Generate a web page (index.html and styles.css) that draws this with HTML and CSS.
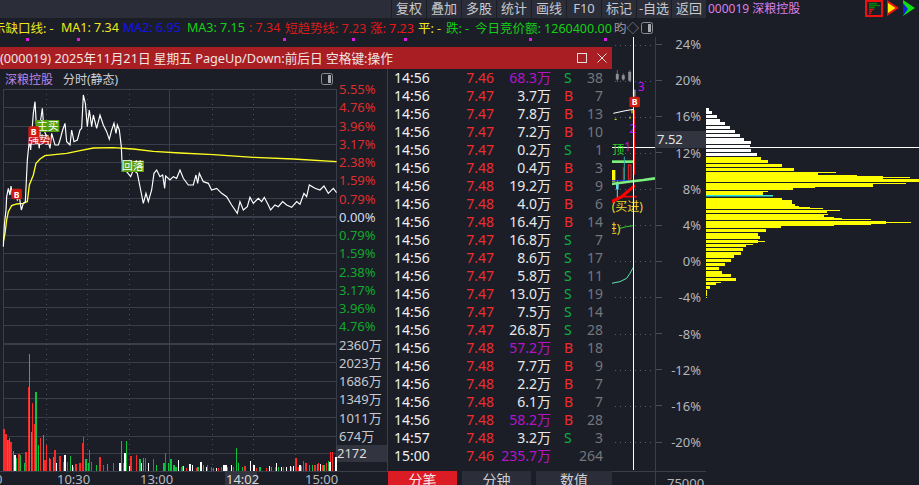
FILE: index.html
```html
<!DOCTYPE html>
<html lang="zh-CN">
<head>
<meta charset="utf-8">
<title>深粮控股 分时</title>
<link rel="stylesheet" href="styles.css">
</head>
<body>
<div class="app">
  <main class="main">
    <nav class="toolbar">
      <span class="tool">复权</span><span class="tool">叠加</span><span class="tool">多股</span><span class="tool">统计</span><span class="tool">画线</span><span class="tool">F10</span><span class="tool">标记</span><span class="tool">-自选</span><span class="tool">返回</span>
    </nav>
    <div class="info">
      <span class="c-y i0">示缺口线: -</span>
      <span class="c-y i1">MA1: 7.34</span>
      <span class="c-b i2">MA2: 6.95</span>
      <span class="c-g i3">MA3: 7.15</span>
      <span class="c-r i4">: 7.34</span>
      <span class="c-r i5">短趋势线: 7.23</span>
      <span class="c-r2 i6">涨: 7.23</span>
      <span class="c-y i7">平: -</span>
      <span class="c-g i8">跌: -</span>
      <span class="c-g i9">今日竞价额: 1260400.00</span>
      <span class="c-grey i10">昀◇</span>
      <svg class="panel-icon i11" viewBox="0 0 12 12"><rect x=".5" y=".5" width="11" height="11" rx="2" fill="none" stroke="#8a8d94"/><rect x="7" y="2" width="3" height="8" fill="#a8abb2"/></svg>
    </div>
    <div class="stage">
      <svg class="canvas" viewBox="0 37 655 448" width="655" height="448">
        <g fill="#e018e8"><rect x="26" y="38" width="3" height="3"/><rect x="77" y="38" width="3" height="3"/><rect x="283" y="38" width="3" height="3"/><rect x="352" y="38" width="3" height="3"/><rect x="404" y="38" width="3" height="3"/><rect x="529" y="38" width="3" height="3"/><rect x="604" y="38" width="3" height="3"/></g>
        <g stroke="#5a5e68" stroke-dasharray="1 4"><path d="M615 45.5H655M615 81.5H655M615 117.5H655M615 153.5H655M615 189.5H655M615 225.5H655M615 261.5H655M615 297.5H655M615 334.5H655M615 370.5H655M615 406.5H655M615 442.5H655"/></g>
        <path d="M612 471.5H655" stroke="#3a3e4a"/>
        <path d="M612 147.5H655" stroke="#fff"/>
        <g transform="translate(600 60) scale(.3333)">
          <g fill="#8d8f94" stroke="#8d8f94"><path d="M52 30V66M70 40V62M90 30V66M104 88V110" stroke-width="2" fill="none"/><rect x="48" y="42" width="8" height="16"/><rect x="66" y="46" width="8" height="12"/><rect x="85" y="36" width="8" height="26"/><rect x="99" y="90" width="7" height="20"/></g>
          <path d="M40 160L72 153 100 148" stroke="#fff" stroke-width="3" fill="none"/>
          <path d="M44 178H50M90 176V170M96 150V160" stroke="#ff0" stroke-width="3"/>
          <path d="M103 150V345" stroke="#f22" stroke-width="4"/>
          <path d="M35 305H100" stroke="#7cf07c" stroke-width="8"/>
          <path d="M73 290V360" stroke="#3aa" stroke-width="3"/>
          <rect x="36" y="330" width="10" height="35" fill="#ff0"/>
          <path d="M70 322V370" stroke="#f22" stroke-width="3"/>
          <rect x="85" y="315" width="8" height="42" fill="none" stroke="#f22" stroke-width="3"/>
          <rect x="48" y="366" width="8" height="22" fill="#5fdce8"/><path d="M52 360V416" stroke="#5fdce8" stroke-width="3"/>
          <path d="M35 362H100" stroke="#1a3cf0" stroke-width="3"/>
          <path d="M35 372L80 366 130 360 165 355" stroke="#7cf07c" stroke-width="8" fill="none"/>
          <path d="M35 425L65 410 105 376" stroke="#f00" stroke-width="9" fill="none"/>
          <path d="M70 410H110" stroke="#f00" stroke-width="5"/>
          <path d="M60 505L80 500 100 497" stroke="#2fd02f" stroke-width="3" fill="none"/>
          <path d="M35 670L60 665 80 655 90 640 100 622" stroke="#5fe8b0" stroke-width="3" fill="none"/>
          <text x="113" y="92" class="sv-n" fill="#c010f0">3</text>
          <text x="88" y="220" class="sv-n" fill="#c010f0">2</text>
          <text x="72" y="272" class="sv-n" fill="#c010f0">1</text>
          <text x="37" y="281" class="sv-t" fill="#25d025">顶</text>
          <text x="35" y="452" class="sv-t" fill="#e8d828">(买进)</text>
          <text x="14" y="520" class="sv-t" fill="#e8d828">进)</text>
        </g>
        <path d="M633.5 37V470" stroke="#fff"/>
        <g transform="translate(600 60) scale(.3333)">
          <rect x="88" y="110" width="32" height="32" rx="5" fill="#d01c10"/>
          <text x="104" y="136" class="sv-b">B</text>
        </g>
        <path d="M611.5 69V485" stroke="#8a8c90"/>
      </svg>
      <aside class="scale">
        <div class="scale-list">
          <div class="tick-row"><i class="tick"></i><span>24%</span></div>
          <div class="tick-row"><i class="tick"></i><span>20%</span></div>
          <div class="tick-row"><i class="tick"></i><span>16%</span></div>
          <div class="tick-row"><i class="tick"></i><span>12%</span></div>
          <div class="tick-row"><i class="tick"></i><span>8%</span></div>
          <div class="tick-row"><i class="tick"></i><span>4%</span></div>
          <div class="tick-row"><i class="tick"></i><span>0%</span></div>
          <div class="tick-row"><i class="tick"></i><span>-4%</span></div>
          <div class="tick-row"><i class="tick"></i><span>-8%</span></div>
          <div class="tick-row"><i class="tick"></i><span>-12%</span></div>
          <div class="tick-row"><i class="tick"></i><span>-16%</span></div>
          <div class="tick-row"><i class="tick"></i><span>-20%</span></div>
        </div>
        <div class="scale-foot">75000</div>
        <div class="price-tag">7.52</div>
      </aside>
    </div>
  </main>

  <aside class="side">
    <header class="side-head">
      <span class="side-title">000019 深粮控股</span>
      <div class="side-icons">
        <svg width="18" height="17" viewBox="0 0 18 17"><rect x="1" y="1" width="16" height="15" fill="none" stroke="#f01010" stroke-width="2"/><path d="M4 3.500H12M4 5.500H15M4 7.500H10" stroke="#0b7d0b" stroke-width="1.400"/><path d="M4 9.500H9M4 11.500H7M4 13.500H6" stroke="#e01010" stroke-width="1.400"/></svg>
        <svg width="12" height="16" viewBox="0 0 12 16"><path d="M0 0L12 8 0 16Z" fill="#f01010"/><path d="M1 3L8.500 8 1 13Z" fill="#ffee00"/></svg>
        <svg width="12" height="16" viewBox="0 0 12 16"><path d="M0 0L12 8 0 16Z" fill="#10e010"/><path d="M0 3L5 9 0 16Z" fill="#1020e0"/></svg>
      </div>
    </header>
    <svg class="profile" viewBox="0 18 213 467" width="213" height="467">
      <g fill="#fff">
        <rect y="108" width="3" height="3"/><rect y="111" width="6" height="3"/><rect y="115" width="11" height="3"/><rect y="119" width="14" height="3"/><rect y="122" width="19" height="3"/><rect y="126" width="24" height="3"/><rect y="130" width="29" height="3"/><rect y="134" width="34" height="3"/><rect y="138" width="38" height="3"/><rect y="141" width="45" height="3"/><rect y="145" width="44" height="2"/><rect y="149" width="45" height="3"/><rect y="153" width="51" height="3"/>
      </g>
      <g fill="#ffff00">
        <rect y="157" width="55" height="3"/><rect y="160" width="62" height="3"/><rect y="164" width="76" height="3"/><rect y="168" width="88" height="3"/><rect y="172" width="112" height="3"/><rect y="172" width="130" height="1"/><rect y="175" width="151" height="1"/>
        <rect y="176" width="177" height="3"/><rect y="177" width="204" height="1"/><rect y="179" width="213" height="3"/><rect y="183" width="200" height="1"/><rect y="184" width="167" height="3"/><rect y="187" width="87" height="3"/><rect y="187" width="109" height="1"/>
        <rect y="191" width="62" height="1"/><rect y="192" width="57" height="3"/><rect y="198" width="76" height="3"/><rect y="200" width="86" height="4"/><rect y="204" width="89" height="2"/><rect y="206" width="93" height="3"/><rect y="207" width="104" height="2"/><rect y="208" width="117" height="1"/>
        <rect y="210" width="134" height="1"/><rect y="211" width="121" height="2"/><rect y="214" width="118" height="3"/><rect y="214" width="122" height="1"/><rect y="217" width="128" height="1"/><rect y="218" width="136" height="2"/><rect y="219" width="165" height="1"/>
        <rect y="221" width="180" height="3"/><rect y="222" width="205" height="1"/><rect y="224" width="165" height="1"/><rect y="225" width="128" height="1"/><rect y="226" width="75" height="2"/>
        <rect y="229" width="60" height="3"/><rect y="233" width="52" height="3"/><rect y="236" width="54" height="3"/><rect y="240" width="52" height="3"/><rect y="241" width="59" height="1"/><rect y="244" width="40" height="3"/><rect y="244" width="47" height="1"/><rect y="248" width="37" height="3"/><rect y="252" width="35" height="3"/><rect y="255" width="28" height="3"/><rect y="259" width="25" height="3"/><rect y="263" width="19" height="3"/><rect y="267" width="13" height="3"/><rect y="271" width="16" height="3"/><rect y="274" width="25" height="3"/><rect y="278" width="30" height="3"/><rect y="282" width="10" height="3"/><rect y="282" width="15" height="1"/><rect y="286" width="4" height="3"/><rect y="290" width="1" height="3"/><rect y="293" width="1" height="3"/><rect y="297" width="1" height="1"/>
      </g>
      <rect y="195" width="67" height="1.500" fill="#30e8d8"/>
      <path d="M0 147.500H213" stroke="#fff"/>
    </svg>
  </aside>

  <section class="window">
    <header class="win-title">
      <span>(000019) 2025年11月21日 星期五 PageUp/Down:前后日 空格键:操作</span>
      <div class="win-ctrl">
        <svg width="10" height="10" viewBox="0 0 10 10"><rect x=".5" y=".5" width="9" height="9" fill="none" stroke="#e8dcdc"/></svg>
        <svg width="10" height="10" viewBox="0 0 10 10"><path d="M.5 .5L9.500 9.500M9.500 .5L.5 9.500" stroke="#e8dcdc"/></svg>
      </div>
    </header>
    <div class="win-body">
      <div class="tick-panel">
        <div class="tick-grid">
          <div class="tick-chart">
            <div class="tick-head">
              <span class="stock">深粮控股</span><span class="mode">分时(静态)</span>
              <svg class="panel-icon push" viewBox="0 0 12 12"><rect x=".5" y=".5" width="11" height="11" rx="2" fill="none" stroke="#8a8d94"/><rect x="7" y="2" width="3" height="8" fill="#a8abb2"/></svg>
            </div>
            <svg class="tick-svg" viewBox="0 89 337 382" width="337" height="382">
              <g stroke="#3a3e4a"><path d="M3.500 89V471M169.500 89V471M336.500 89V471M3 89.500H336M3 107.500H336M3 126.500H336M3 144.500H336M3 162.500H336M3 180.500H336M3 198.500H336M3 235.500H336M3 253.500H336M3 271.500H336M3 289.500H336M3 307.500H336M3 325.500H336M3 362.500H336M3 381.500H336M3 398.500H336M3 417.500H336M3 436.500H336M3 453.500H336"/></g>
              <path d="M3 217H336M3 344H336" stroke="#3a3e4a" stroke-width="2"/>
              <path d="M46.500 89V471M87.500 89V471M129.500 89V471M212.500 89V471M253.500 89V471M295.500 89V471" stroke="#4a4e5a" stroke-dasharray="1 4"/>
              <g transform="translate(0 90) scale(.3333)" fill="none">
                <polyline stroke="#ffff20" stroke-width="4" points="10,455 15,430 20,390 25,365 35,347 50,342 70,340 82,335 88,285 100,255 108,220 120,207 135,197 170,193 200,190 240,182 280,174 340,173 400,177 460,184 540,189 640,194 760,202 880,207 1010,215"/>
                <polyline stroke="#fff" stroke-width="3.500" points="10,470 13,405 18,360 20,320 25,295 30,315 33,288 38,320 45,305 52,330 58,320 64,360 70,340 76,335 82,210 88,150 92,180 97,110 100,70 105,35 110,120 118,175 122,90 127,55 132,120 140,140 150,175 155,130 165,165 175,165 180,150 188,120 195,100 200,155 210,165 215,120 222,155 232,150 240,120 245,115 250,15 256,40 262,110 268,60 275,110 280,75 290,115 300,75 310,105 320,125 328,148 335,120 342,100 348,130 352,105 358,120 364,170 366,215 380,245 392,260 400,240 412,250 422,300 430,340 438,310 445,335 455,300 462,250 470,240 480,260 488,255 494,295 497,258 510,270 520,260 530,265 540,240 550,265 565,285 580,285 588,255 593,280 598,250 610,275 625,280 635,300 650,295 665,310 680,320 695,345 712,370 720,335 730,360 742,350 750,322 760,340 775,325 785,335 793,322 805,345 812,360 825,345 835,350 848,335 860,345 875,352 890,335 900,343 912,310 920,320 928,285 945,295 960,300 972,288 985,310 1000,295 1010,308"/>
              </g>
              <g transform="translate(0 90) scale(.3333)">
                <rect x="85" y="140" width="67" height="21" fill="#c8202a"/>
                <text x="85" y="161" class="sv-tag" fill="#ffe8e8">强势</text>
                <rect x="108" y="90" width="70" height="36" fill="#56a010"/>
                <text x="110" y="120" class="sv-tag" fill="#fff">主买</text>
                <rect x="364" y="212" width="68" height="34" fill="#56a010"/>
                <text x="365" y="241" class="sv-tag" fill="#fff">回落</text>
                <rect x="85" y="109" width="33" height="33" rx="6" fill="#d01c10"/>
                <text x="101" y="136" class="sv-b">B</text>
                <rect x="34" y="296" width="32" height="32" rx="6" fill="#d01c10"/>
                <text x="50" y="323" class="sv-b">B</text>
              </g>
              <g transform="translate(0 330) scale(.3333)" stroke-width="4" shape-rendering="crispEdges" fill="none">
                <path stroke="#fa2a2a" d="M12 423V297M18 423V312M27 423V330M33 423V335M45 423V378M57 423V372M78 423V365M85 423V170M97 423V220M103 423V282M122 423V325M135 423V390M140 423V345M150 423V388M165 423V360M180 423V378M190 423V395M203 423V395M220 423V410M228 423V402M240 423V400M247 423V340M250 423V322M268 423V360M275 423V395M300 423V380M310 423V405M340 423V400M358 423V398M372 423V400M393 423V378M410 423V376M436 423V385M460 423V388M496 423V368M520 423V410M545 423V412M560 423V414M590 423V414M622 423V405M635 423V412M655 423V415M665 423V412M700 423V412M735 423V407M770 423V415M800 423V414M826 423V410M850 423V412M888 423V385M895 423V410M910 423V393M918 423V400M945 423V405M955 423V400M968 423V405M980 423V400M992 423V366M998 423V366"/>
                <path stroke="#10c040" d="M22 423V330M28 423V323M40 423V363M50 423V385M62 423V375M73 423V400M88 423V72M94 423V305M108 423V186M115 423V345M130 423V315M148 423V385M160 423V380M211 423V378M258 423V387M265 423V400M290 423V405M322 423V402M364 423V333M380 423V333M420 423V388M430 423V385M470 423V405M492 423V400M505 423V398M513 423V386M522 423V405M528 423V412M548 423V408M594 423V412M610 423V405M640 423V413M682 423V412M709 423V354M715 423V400M728 423V410M780 423V412M815 423V410M835 423V412M875 423V412M905 423V408M928 423V405M938 423V404M952 423V402M972 423V405M986 423V393"/>
                <path stroke="#fff" d="M45 423V375M170 423V400M195 423V375M218 423V405M360 423V400M375 423V370M388 423V408M425 423V400M445 423V400M535 423V390M550 423V407M570 423V402M578 423V404M603 423V397M620 423V410M650 423V413M672 423V405M678 423V405M695 423V405M752 423V393M762 423V405M808 423V408M830 423V398M845 423V410M860 423V410M872 423V408M880 423V408M900 423V405M962 423V402M990 423V395M1008 423V382"/>
              </g>
            </svg>
          </div>
          <div class="tick-scale">
            <span class="up">5.55%</span><span class="up">4.76%</span><span class="up">3.96%</span><span class="up">3.17%</span><span class="up">2.38%</span><span class="up">1.59%</span><span class="up">0.79%</span><span class="zero">0.00%</span><span class="down">0.79%</span><span class="down">1.59%</span><span class="down">2.38%</span><span class="down">3.17%</span><span class="down">3.96%</span><span class="down">4.76%</span><span class="vol">2360万</span><span class="vol">2023万</span><span class="vol">1686万</span><span class="vol">1349万</span><span class="vol">1011万</span><span class="vol">674万</span><span class="cur">2172</span>
          </div>
        </div>
        <div class="axis">
          <span class="a0">0</span><span class="a1">10:30</span><span class="a2">13:00</span><span class="a3">14:02</span><span class="a4">15:00</span>
        </div>
      </div>
      <div class="deals">
        <div class="deal-list">
          <div class="row"><span>14:56</span><span class="pr">7.46</span><span class="big">68.3万</span><span class="s">S</span><span class="n">38</span></div>
          <div class="row"><span>14:56</span><span class="pr">7.47</span><span class="v">3.7万</span><span class="b">B</span><span class="n">7</span></div>
          <div class="row"><span>14:56</span><span class="pr">7.47</span><span class="v">7.8万</span><span class="b">B</span><span class="n">13</span></div>
          <div class="row"><span>14:56</span><span class="pr">7.47</span><span class="v">7.2万</span><span class="b">B</span><span class="n">10</span></div>
          <div class="row"><span>14:56</span><span class="pr">7.47</span><span class="v">0.2万</span><span class="s">S</span><span class="n">1</span></div>
          <div class="row"><span>14:56</span><span class="pr">7.48</span><span class="v">0.4万</span><span class="b">B</span><span class="n">3</span></div>
          <div class="row"><span>14:56</span><span class="pr">7.48</span><span class="v">19.2万</span><span class="b">B</span><span class="n">9</span></div>
          <div class="row"><span>14:56</span><span class="pr">7.48</span><span class="v">4.0万</span><span class="b">B</span><span class="n">6</span></div>
          <div class="row"><span>14:56</span><span class="pr">7.48</span><span class="v">16.4万</span><span class="b">B</span><span class="n">14</span></div>
          <div class="row"><span>14:56</span><span class="pr">7.47</span><span class="v">16.8万</span><span class="s">S</span><span class="n">7</span></div>
          <div class="row"><span>14:56</span><span class="pr">7.47</span><span class="v">8.6万</span><span class="s">S</span><span class="n">17</span></div>
          <div class="row"><span>14:56</span><span class="pr">7.47</span><span class="v">5.8万</span><span class="s">S</span><span class="n">11</span></div>
          <div class="row"><span>14:56</span><span class="pr">7.47</span><span class="v">13.0万</span><span class="s">S</span><span class="n">19</span></div>
          <div class="row"><span>14:56</span><span class="pr">7.47</span><span class="v">7.5万</span><span class="s">S</span><span class="n">14</span></div>
          <div class="row"><span>14:56</span><span class="pr">7.47</span><span class="v">26.8万</span><span class="s">S</span><span class="n">28</span></div>
          <div class="row"><span>14:56</span><span class="pr">7.48</span><span class="big">57.2万</span><span class="b">B</span><span class="n">18</span></div>
          <div class="row"><span>14:56</span><span class="pr">7.48</span><span class="v">7.7万</span><span class="b">B</span><span class="n">9</span></div>
          <div class="row"><span>14:56</span><span class="pr">7.48</span><span class="v">2.2万</span><span class="b">B</span><span class="n">7</span></div>
          <div class="row"><span>14:56</span><span class="pr">7.48</span><span class="v">6.1万</span><span class="b">B</span><span class="n">7</span></div>
          <div class="row"><span>14:56</span><span class="pr">7.48</span><span class="big">58.2万</span><span class="b">B</span><span class="n">28</span></div>
          <div class="row"><span>14:57</span><span class="pr">7.48</span><span class="v">3.2万</span><span class="s">S</span><span class="n">3</span></div>
          <div class="row"><span>15:00</span><span class="pr">7.46</span><span class="big">235.7万</span><span></span><span class="n">264</span></div>
        </div>
        <div class="tabs">
          <span class="tab on">分笔</span><span class="tab">分钟</span><span class="tab">数值</span>
        </div>
      </div>
    </div>
  </section>
</div>
</body>
</html>
```
FILE: styles.css
```css
* { box-sizing: border-box; }
html, body { margin: 0; height: 100%; }
body {
  background: #1b1e27;
  color: #ddd;
  font-family: "Noto Sans", "Noto Sans CJK SC", sans-serif;
  font-size: 14px;
  overflow: hidden;
}
svg { display: block; }
.app {
  position: relative;
  width: 919px;
  height: 485px;
  display: flex;
  overflow: hidden;
}
.main { width: 706px; flex: none; display: flex; flex-direction: column; }

.toolbar {
  height: 18px;
  background: #2b2e39;
  display: flex;
  justify-content: flex-end;
  flex: none;
}
.tool {
  width: 35px;
  border-left: 1px solid #1b1e27;
  text-align: center;
  font-size: 13px;
  line-height: 17px;
  color: #c8c9cd;
  white-space: nowrap;
}

.info {
  height: 19px;
  flex: none;
  display: flex;
  align-items: center;
  white-space: nowrap;
  font-size: 12.500px;
  overflow: hidden;
}
.info span { flex: none; }
.c-y { color: #f0e81c; }
.c-b { color: #1414e8; }
.c-g { color: #14d014; }
.c-r { color: #d81c1c; }
.c-r2 { color: #f01414; }
.c-grey { color: #9a9ca2; }
.i0 { margin-left: -7px; width: 68px; }
.i1 { width: 62px; }
.i2 { width: 64px; }
.i3 { width: 62px; }
.i4 { width: 36px; }
.i5 { width: 85px; }
.i6 { width: 48px; }
.i7 { width: 28px; }
.i8 { width: 29px; }
.i9 { width: 139px; }
.i10 { width: 27px; }
.panel-icon { width: 12px; height: 12px; flex: none; }

.stage { flex: 1; display: flex; min-height: 0; }
.canvas { flex: none; }
.scale {
  position: relative;
  width: 51px;
  flex: none;
  border-left: 1px solid #3a3e4a;
  color: #b4b6bb;
  font-size: 13px;
  overflow: hidden;
}
.scale-list { margin-top: -11px; }
.tick-row {
  height: 36.2px;
  display: flex;
  align-items: center;
  justify-content: space-between;
  padding-right: 5px;
}
.tick { width: 6px; height: 1px; background: #4a4e5a; }
.scale-foot {
  margin-top: 11px;
  border-top: 1px solid #3a3e4a;
  padding-left: 11px;
  line-height: 22px;
}
.price-tag {
  position: absolute;
  top: 94px;
  left: 0;
  width: 50px;
  height: 17px;
  padding-left: 1px;
  background: #32353f;
  color: #e6e6e6;
  line-height: 17px;
}

.side { flex: 1; display: flex; flex-direction: column; }
.side-head {
  height: 18px;
  flex: none;
  display: flex;
  justify-content: space-between;
  align-items: flex-start;
  padding-left: 2px;
  padding-right: 4px;
}
.side-title { color: #dc7fe8; font-size: 12px; line-height: 17px; }
.side-icons { display: flex; gap: 4px; }

.window {
  position: absolute;
  left: 0;
  top: 47px;
  width: 612px;
  height: 438px;
  background: #1b1e27;
  display: flex;
  flex-direction: column;
}
.win-title {
  height: 22px;
  flex: none;
  background: #a91e23;
  color: #f0e4e4;
  font-size: 12.700px;
  line-height: 22px;
  display: flex;
  justify-content: space-between;
  align-items: center;
  padding-right: 5px;
  white-space: nowrap;
}
.win-ctrl { display: flex; gap: 10px; }
.win-body { flex: 1; display: flex; min-height: 0; }

.tick-panel { width: 388px; flex: none; display: flex; flex-direction: column; }
.tick-grid { display: flex; height: 402px; }
.tick-chart { width: 337px; flex: none; }
.tick-head {
  height: 20px;
  display: flex;
  align-items: center;
  padding: 0 4px 0 5px;
  font-size: 12px;
}
.stock { color: #b886e8; margin-right: 10px; }
.mode { color: #cfd0d4; }
.push { margin-left: auto; }
.tick-svg { display: block; }

.tick-scale {
  width: 51px;
  flex: none;
  padding-top: 11px;
  display: grid;
  grid-auto-rows: 18.26px;
  align-content: start;
  font-size: 13px;
  border-right: 1px solid #3a3e4a;
  overflow: hidden;
}
.tick-scale span { padding-left: 2px; line-height: 18px; white-space: nowrap; }
.up { color: #dd2e2e; }
.zero { color: #cfdcf0; }
.down { color: #12a82e; }
.vol { color: #c8c9cd; }
.tick-scale .cur { background: #32353f; color: #dcdcdc; padding-left: 0; height: 17px; line-height: 17px; }

.axis {
  height: 14px;
  display: flex;
  border-top: 1px solid #3a3e4a;
  font-size: 13px;
  line-height: 15px;
  color: #b8bac0;
  white-space: nowrap;
}
.a0 { margin-left: -5px; width: 8px; }
.a1 { margin-left: 54px; width: 30px; }
.a2 { margin-left: 53px; width: 30px; }
.a3 { margin-left: 55px; padding: 0 1px; width: 32px; background: #32353f; color: #d8d9dd; }
.a4 { margin-left: 48px; width: 30px; }

.deals { flex: 1; display: flex; flex-direction: column; min-width: 0; }
.deal-list { height: 402px; }
.row {
  height: 18px;
  padding-left: 6px;
  display: grid;
  grid-template-columns: 40px 60px 57px 24px 28px;
  line-height: 18px;
  color: #eef0f4;
}
.pr, .v, .big, .n { text-align: right; white-space: nowrap; }
.pr { color: #f02c2c; }
.v { color: #e8e8ea; }
.big { color: #b414c8; }
.s, .b { padding-left: 13px; }
.s { color: #10b040; }
.b { color: #f02c2c; }
.n { color: #74767c; }

.tabs {
  flex: 1;
  display: grid;
  grid-template-columns: 69px 69px 76px;
  column-gap: 5px;
  overflow: hidden;
}
.tab {
  background: #2b2e39;
  color: #d0d1d5;
  text-align: center;
  line-height: 18px;
}
.tab.on { background: #dc1c24; color: #f6e8e8; }

.sv-b { font: 700 26px "Noto Sans", sans-serif; fill: #fff; text-anchor: middle; }
.sv-n { font: 400 36px "Noto Sans", sans-serif; }
.sv-t { font: 400 36px "Noto Sans", "Noto Sans CJK SC", sans-serif; }
.sv-tag { font: 400 33px "Noto Sans", "Noto Sans CJK SC", sans-serif; }
```
